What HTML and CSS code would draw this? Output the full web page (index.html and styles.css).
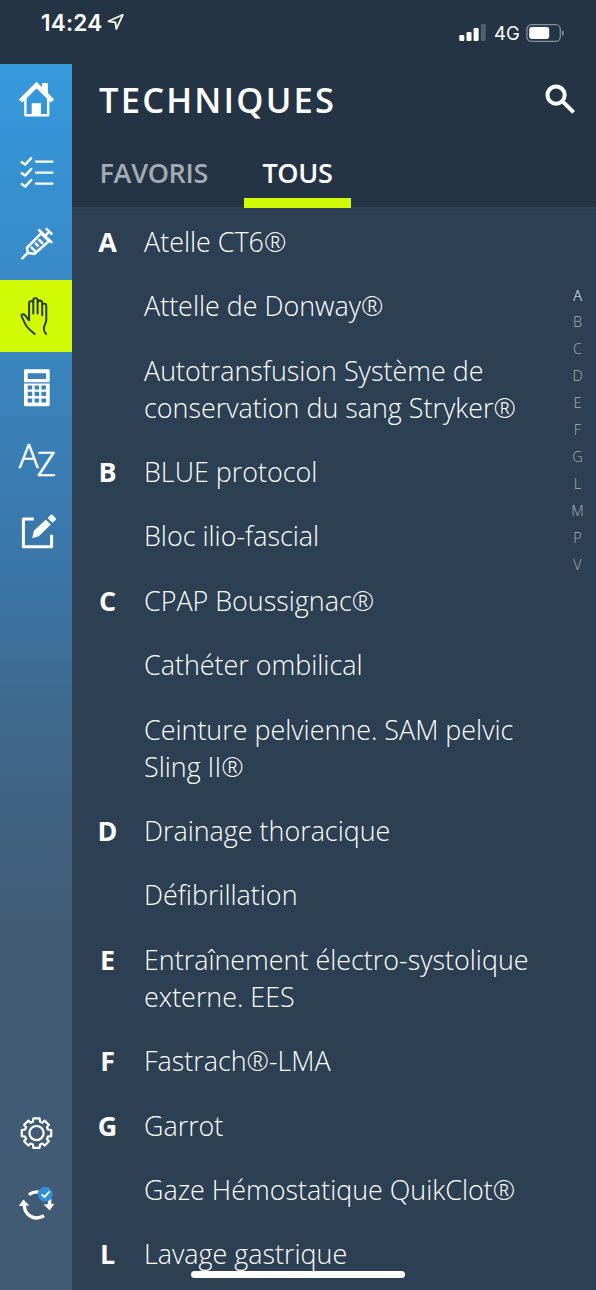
FILE: index.html
```
<!DOCTYPE html>
<html lang="fr">
<head>
    <meta charset="UTF-8">
    <meta name="viewport" content="width=device-width, initial-scale=1.0">
    <title>Techniques</title>
    <link rel="stylesheet" href="styles.css">
</head>
<body>
<div class="screen">

    <!-- Status bar -->
    <div class="status-bar">
        <div class="status-left">
            <span class="time">14:24</span>
            <svg class="location" width="18" height="18" viewBox="0 0 18 18"><path d="M15.8 1.8 1.4 8.3l7 1.1 1 6.6z"/></svg>
        </div>
        <div class="status-right">
            <svg class="signal" width="28" height="18" viewBox="0 0 28 18">
                <rect x=".3" y="11" width="5" height="6" rx="1.2"/>
                <rect x="7.5" y="8" width="5" height="9" rx="1.2"/>
                <rect x="14.6" y="4" width="5" height="13" rx="1.2"/>
                <rect class="dim" x="21.8" y="0" width="5" height="17" rx="1.2"/>
            </svg>
            <span class="network">4G</span>
            <svg class="battery" width="40" height="18" viewBox="0 0 40 18">
                <rect class="case" x=".9" y=".7" width="33.4" height="16.6" rx="4.6"/>
                <rect x="3.2" y="3" width="20" height="12" rx="2.4"/>
                <path class="nub" d="M36 6.2q2 .8 2 2.8t-2 2.8z"/>
            </svg>
        </div>
    </div>

    <div class="layout">
        <!-- Sidebar -->
        <nav class="sidebar">
            <a class="item">
                <svg viewBox="0 0 72 72">
                    <path class="fill" d="M36.6 17.8 42 23.2V19H48V29l6.2 6.4-3.2 3.2L36.6 24.4 22.2 38.6l-3.4-3.2z"/>
                    <path d="M25.4 35V51.2H48.2V35" stroke-width="2.4"/>
                    <path class="fill" d="M31.7 39.2H41V51h-9.3z"/>
                </svg>
            </a>
            <a class="item">
                <svg viewBox="0 0 72 72">
                    <path d="M36 25.6H52.4M36 36.6H52.4M36 47.6H52.4M21.7 26l3.4 2.6 6.2-6.6M21.7 37l3.4 2.6 6.2-6.6M21.7 48l3.4 2.6 6.2-6.6" stroke-width="2.4"/>
                </svg>
            </a>
            <a class="item">
                <svg viewBox="0 0 72 72">
                    <path d="M22.3 50.3l5.6-5.6M27.9 44.7l-1-4.9L41 25.4l8 7.6-14.6 13zM39 22l12.4 12.2M45.2 27.8l4-4.2M46.6 20.9l5 5M31.6 39.6l3 3M35.8 35.6l2 2M39.2 32l3 3" stroke-width="2.5"/>
                </svg>
            </a>
            <a class="item active">
                <svg viewBox="0 0 72 72">
                    <path d="M34.7 54C29.5 49.6 26.8 47.8 25 43.5 23.8 40.6 22.5 38.6 21.6 36c-.5-1.6 1.4-2.4 2.9-1.3 1.9 1.5 2.8 3.9 4.6 5.6V23.4c0-3 4.2-3 4.2 0V33.6M33.3 24V20.4c0-3 4.3-3 4.3 0V33.6M37.6 23c0-3.4 4.6-3.4 4.6 0V35.4M42.2 26c0-3.2 4.1-3.2 4.1 0V40c0 3.2-2.7 5.2-2.4 9 .2 2.2.8 3.8 2.3 5" stroke-width="1.9"/>
                </svg>
            </a>
            <a class="item">
                <svg viewBox="0 0 72 72">
                    <path class="fill" fill-rule="evenodd" d="M25.2 17.2H48.5q1.2 0 1.2 1.2V30.2H24V18.4q0-1.2 1.2-1.2zM27.7 21.3V27H46V21.3zM24 31.4H49.7V53q0 1.2-1.2 1.2H25.2Q24 54.2 24 53zM27.7 33.4v4.1h4.5v-4.1zM34.6 33.4v4.1h4.5v-4.1zM41.4 33.4v4.1H46v-4.1zM27.7 39.8v4.1h4.5v-4.1zM34.6 39.8v4.1h4.5v-4.1zM41.4 39.8v4.1H46v-4.1zM27.7 46.4v4.1h4.5v-4.1zM34.6 46.4v4.1h4.5v-4.1zM41.4 46.4v4.1H46v-4.1z"/>
                </svg>
            </a>
            <a class="item">
                <svg viewBox="0 0 72 72">
                    <text x="18.8" y="45.2">A</text>
                    <text x="36.8" y="52.8">Z</text>
                </svg>
            </a>
            <a class="item">
                <svg viewBox="0 0 72 72">
                    <path d="M33.8 23.9H23.4V51.8H51.6V39.8" stroke-width="3" class="square"/>
                    <path class="fill" d="M32.2 43.3 34 35.4 45.8 24.8 50.8 29.6 38.8 41.2zM47.6 23.3 50.6 19.8q.8-.8 1.7 0l3.5 3.4q.8.8 0 1.6l-3.2 3z"/>
                </svg>
            </a>

            <a class="item bottom">
                <svg viewBox="0 0 72 72">
                    <g transform="translate(36.5 36.1)" stroke-width="2.2">
                        <path d="M14.7-3.1V3.1L11.4 3.6 10.4 5.9 12.4 8.2 8.2 12.4 5.9 10.4 3.6 11.4 3.1 14.7H-3.1L-3.6 11.4-5.9 10.4-8.2 12.4-12.4 8.2-10.4 5.9-11.4 3.6-14.7 3.1V-3.1L-11.4-3.6-10.4-5.9-12.4-8.2-8.2-12.4-5.9-10.4-3.6-11.4-3.1-14.7H3.1L3.6-11.4 5.9-10.4 8.2-12.4 12.4-8.2 10.4-5.9 11.4-3.6z"/>
                        <circle r="7.1"/>
                    </g>
                </svg>
            </a>
            <a class="item">
                <svg viewBox="0 0 72 72">
                    <path d="M28.9 25.6Q33.2 22.6 38.6 22.9M49.6 30V36M24.2 35.5C24.4 46.2 34 52.4 44 46.8" stroke-width="3.4" class="square"/>
                    <path class="fill" d="M18.8 37.1 23.3 30.6 29.4 36.4zM43.6 35.4 54.2 34.8 49.8 41.6z"/>
                    <circle class="badge" cx="45.3" cy="25.3" r="7.5"/>
                    <path d="M42.2 26l2.3 2.1 4.7-5.2" stroke-width="1.9"/>
                </svg>
            </a>
        </nav>

        <main class="main">
            <header class="header">
                <div class="title-row">
                    <h1>TECHNIQUES</h1>
                    <svg class="search" width="32" height="32" viewBox="0 0 32 32">
                        <circle cx="11.1" cy="11.1" r="8.6"/>
                        <path d="M17.6 17.4 28.6 28.4"/>
                    </svg>
                </div>
                <div class="tabs">
                    <a class="tab favoris">FAVORIS</a>
                    <a class="tab tous selected">TOUS</a>
                </div>
            </header>

            <div class="content">
                <ul class="list">
                    <li><b>A</b><span>Atelle CT6®</span></li>
                    <li><b></b><span>Attelle de Donway®</span></li>
                    <li><b></b><span>Autotransfusion Système de conservation du sang Stryker®</span></li>
                    <li><b>B</b><span>BLUE protocol</span></li>
                    <li><b></b><span>Bloc ilio-fascial</span></li>
                    <li><b>C</b><span>CPAP Boussignac®</span></li>
                    <li><b></b><span>Cathéter ombilical</span></li>
                    <li><b></b><span>Ceinture pelvienne. SAM pelvic Sling II®</span></li>
                    <li><b>D</b><span>Drainage thoracique</span></li>
                    <li><b></b><span>Défibrillation</span></li>
                    <li><b>E</b><span>Entraînement électro-systolique externe. EES</span></li>
                    <li><b>F</b><span>Fastrach®-LMA</span></li>
                    <li><b>G</b><span>Garrot</span></li>
                    <li><b></b><span>Gaze Hémostatique QuikClot®</span></li>
                    <li><b>L</b><span>Lavage gastrique</span></li>
                </ul>
                <nav class="index">
                    <a class="current">A</a>
                    <a>B</a>
                    <a>C</a>
                    <a>D</a>
                    <a>E</a>
                    <a>F</a>
                    <a>G</a>
                    <a>L</a>
                    <a>M</a>
                    <a>P</a>
                    <a>V</a>
                </nav>
            </div>
        </main>
    </div>

    <div class="home-indicator"></div>
</div>
</body>
</html>
```
FILE: styles.css
```
* {
    box-sizing: border-box;
}

body {
    margin: 0;
    font-family: "Open Sans", sans-serif;
    color: #fff;
    background-color: #253445;
}

.screen {
    position: relative;
    display: flex;
    flex-direction: column;
    width: 596px;
    height: 1290px;
    overflow: hidden;
}

/* Status bar */
.status-bar {
    display: flex;
    justify-content: space-between;
    height: 64px;
    padding: 0 30px 0 41px;
    font-family: Inter, sans-serif;
}

.status-left {
    display: flex;
    align-items: flex-start;
    gap: 5px;
    padding-top: 9px;
}

.time {
    font-size: 22.5px;
    line-height: 28px;
    font-weight: 600;
    letter-spacing: 0.2px;
}

.location {
    margin-top: 4px;
    fill: none;
    stroke: #fff;
    stroke-width: 1.8;
    stroke-linejoin: round;
}

.status-right {
    display: flex;
    align-items: flex-start;
    padding-top: 24px;
    fill: #fff;
}

.network {
    width: 32px;
    margin: -2px 0 0 7px;
    font-size: 18.5px;
    line-height: 23px;
}

.dim {
    fill: #51606f;
}

.case {
    fill: none;
    stroke: #84909c;
    stroke-width: 1.3;
}

.nub {
    fill: #84909c;
}

.layout {
    display: flex;
    flex: 1;
    min-height: 0;
}

/* Sidebar */
.sidebar {
    display: flex;
    flex-direction: column;
    width: 72px;
    padding-bottom: 49px;
    background: linear-gradient(#3599dd 0%, #3b76a8 41%, #3e688c 54%, #425b75 70%, #425b75 100%);
}

.item {
    height: 71.9px;
}

.item.active {
    background-color: #d0fb04;
}

.item.bottom {
    margin-top: auto;
}

.item svg {
    display: block;
    width: 72px;
    height: 72px;
    fill: none;
    stroke: #fff;
    stroke-linecap: round;
    stroke-linejoin: round;
}

.item.active svg {
    stroke: #26333a;
}

.item .fill {
    fill: #fff;
    stroke: none;
}

.item .square {
    stroke-linecap: butt;
}

.item .badge {
    fill: #2f8fd8;
    stroke: none;
}

.item text {
    fill: #fff;
    stroke-width: 0.6;
    font-size: 33px;
    font-weight: 300;
}

/* Header */
.main {
    display: flex;
    flex-direction: column;
    flex: 1;
}

.header {
    height: 145px;
    border-bottom: 2px solid #334659;
}

.title-row {
    display: flex;
    justify-content: space-between;
    height: 72px;
    padding: 0 19px 0 27px;
}

h1 {
    margin: 0;
    font-size: 34.5px;
    line-height: 71px;
    font-weight: 600;
    letter-spacing: 2.2px;
}

.search {
    margin-top: 20px;
    fill: none;
    stroke: #fff;
    stroke-width: 4;
}

.tabs {
    display: flex;
    height: 71.5px;
}

.tab {
    font-size: 27px;
    line-height: 73px;
    font-weight: 600;
    letter-spacing: -0.3px;
    color: #a3abb3;
}

.favoris {
    width: 172px;
    padding-left: 27.5px;
}

.tous {
    width: 107px;
    text-align: center;
}

.tab.selected {
    color: #fff;
    border-bottom: 10px solid #d0fb04;
}

/* List */
.content {
    display: flex;
    flex: 1;
    min-height: 0;
    background-color: #2c3f53;
}

.list {
    flex: 1;
    margin: 0;
    padding: 1px 0 0;
    list-style: none;
    font-size: 26.88px;
    line-height: 36.84px;
    font-weight: 300;
}

.list li {
    display: flex;
    padding: 13.8px 0;
}

.list b {
    width: 72px;
    padding-right: 1px;
    font-weight: 700;
    text-align: center;
}

.list span {
    flex: 1;
}

.index {
    width: 37px;
    padding-top: 73.5px;
    font-size: 14.5px;
    font-weight: 300;
    text-align: center;
    color: #a9b3bd;
}

.index a {
    display: block;
    line-height: 26.95px;
}

.index .current {
    color: #fff;
}

.home-indicator {
    position: absolute;
    left: 191px;
    bottom: 12px;
    width: 214px;
    height: 7px;
    border-radius: 4px;
    background-color: #fff;
}
```
